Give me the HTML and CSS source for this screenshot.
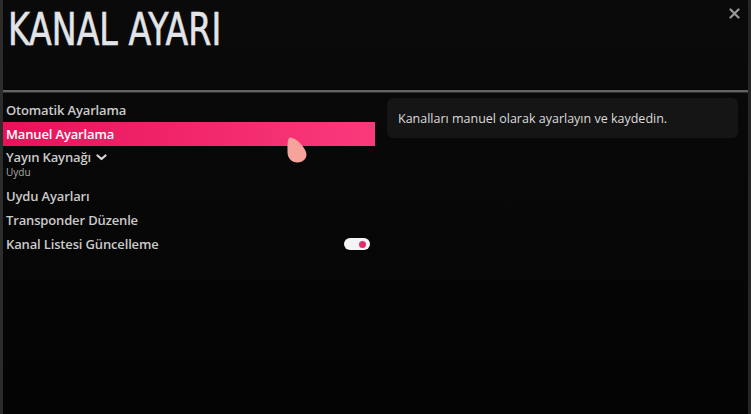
FILE: index.html
```html
<!DOCTYPE html>
<html lang="tr">
<head>
<meta charset="utf-8">
<title>KANAL AYARI</title>
<link rel="stylesheet" href="styles.css">
</head>
<body>
<div class="screen">
  <header class="header">
    <h1 class="title">KANAL AYARI</h1>
    <svg class="close" width="11" height="11" viewBox="0 0 11 11"><path d="M1.5 1.5 L9.5 9.5 M9.5 1.5 L1.5 9.5" stroke="#999999" stroke-width="2.2" stroke-linecap="round"/></svg>
  </header>
  <div class="divider"></div>
  <main class="content">
    <ul class="menu">
      <li class="item">Otomatik Ayarlama</li>
      <li class="item active">Manuel Ayarlama
        <svg class="cursor" width="24" height="28" viewBox="0 0 24 28"><path d="M5 1.5 C 10 1, 19 10, 21 16 C 23 22, 18 26.5, 12.5 26.5 C 6.5 26.5, 2.5 22, 2.5 16 C 2.5 10, 2 3, 5 1.5 Z" fill="#f6a39c"/></svg>
      </li>
      <li class="item tall">
        <span class="label">Yayın Kaynağı <svg class="chev" width="11" height="7" viewBox="0 0 11 7"><path d="M1.5 1.5 L5.5 5 L9.5 1.5" fill="none" stroke="#d8d8d8" stroke-width="2.2" stroke-linecap="round" stroke-linejoin="round"/></svg></span>
        <span class="sub">Uydu</span>
      </li>
      <li class="item">Uydu Ayarları</li>
      <li class="item">Transponder Düzenle</li>
      <li class="item split">Kanal Listesi Güncelleme <span class="toggle"><span class="dot"></span></span></li>
    </ul>
    <aside class="info">
      <p class="desc">Kanalları manuel olarak ayarlayın ve kaydedin.</p>
    </aside>
  </main>
</div>
</body>
</html>
```
FILE: styles.css
```css
html, body {
  margin: 0;
  padding: 0;
  background: #050505;
}
.screen {
  width: 751px;
  height: 414px;
  box-sizing: border-box;
  border-left: 3px solid #2c2c2c;
  border-right: 3px solid #262626;
  background: linear-gradient(#0a0a0a, #040404);
  font-family: "Open Sans", sans-serif;
  overflow: hidden;
}
.header {
  height: 90px;
  display: flex;
  justify-content: space-between;
  align-items: flex-start;
  padding: 0 8px 0 5px;
}
.title {
  margin: 7px 0 0;
  font-family: "DejaVu Sans Condensed", sans-serif;
  font-weight: normal;
  font-size: 45px;
  line-height: 45px;
  color: #e2e4e7;
  transform: scaleX(0.82);
  transform-origin: left center;
  white-space: nowrap;
  -webkit-text-stroke: 0.6px #e2e4e7;
}
.close {
  margin-top: 8px;
}
.divider {
  height: 2px;
  background: #626262;
  border-bottom: 1px solid #2e2e2e;
}
.content {
  display: flex;
  gap: 12px;
  padding-top: 5px;
}
.menu {
  list-style: none;
  margin: 0;
  padding: 0;
  width: 372px;
}
.item {
  position: relative;
  height: 24px;
  display: flex;
  align-items: center;
  padding: 0 5px 0 3px;
  font-size: 13px;
  font-weight: 600;
  color: #cacaca;
  letter-spacing: -0.15px;
}
.item.active {
  background: linear-gradient(to right, #e8125a, #fa3a7c);
  color: #ffffff;
}
.item.tall {
  height: 38px;
  flex-direction: column;
  align-items: flex-start;
  justify-content: flex-start;
  padding-top: 2px;
  box-sizing: border-box;
}
.label {
  display: flex;
  align-items: center;
  gap: 5px;
  height: 18px;
}
.sub {
  font-size: 10px;
  font-weight: 400;
  color: #a8a8a8;
  line-height: 13px;
  letter-spacing: 0;
}
.item.split {
  justify-content: space-between;
}
.toggle {
  width: 26px;
  height: 12px;
  border-radius: 6px;
  background: #f4f4f4;
  display: flex;
  align-items: center;
  justify-content: flex-end;
  padding-right: 4px;
  box-sizing: border-box;
}
.dot {
  width: 7px;
  height: 7px;
  border-radius: 50%;
  background: #e8286c;
}
.cursor {
  position: absolute;
  left: 282px;
  top: 14px;
}
.info {
  width: 351px;
  height: 40px;
  border-radius: 6px;
  background: #151515;
  display: flex;
  align-items: center;
  padding: 0 11px;
  box-sizing: border-box;
}
.desc {
  margin: 0;
  font-size: 12.5px;
  color: #dcdcdc;
  white-space: nowrap;
}
```
